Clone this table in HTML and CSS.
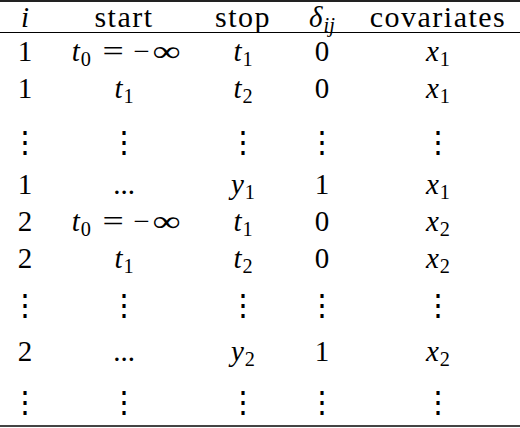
FILE: index.html
```html
<!DOCTYPE html>
<html lang="en">
<head>
    <meta charset="UTF-8">
    <title>Counting process data</title>
    <link rel="stylesheet" href="styles.css">
</head>
<body>
    <table class="data">
        <colgroup>
            <col class="c-i">
            <col class="c-start">
            <col class="c-stop">
            <col class="c-delta">
            <col class="c-cov">
        </colgroup>
        <thead>
            <tr>
                <th><var>i</var></th>
                <th class="word">start</th>
                <th class="word">stop</th>
                <th><var>δ</var><sub><var>ij</var></sub></th>
                <th class="word">covariates</th>
            </tr>
        </thead>
        <tbody>
            <tr>
                <td>1</td>
                <td><var>t</var><sub>0</sub><span class="eq">=</span>−<span class="inf">∞</span></td>
                <td><var>t</var><sub>1</sub></td>
                <td>0</td>
                <td><var>x</var><sub>1</sub></td>
            </tr>
            <tr>
                <td>1</td>
                <td><var>t</var><sub>1</sub></td>
                <td><var>t</var><sub>2</sub></td>
                <td>0</td>
                <td><var>x</var><sub>1</sub></td>
            </tr>
            <tr class="dots dots-a">
                <td>⋮</td><td>⋮</td><td>⋮</td><td>⋮</td><td>⋮</td>
            </tr>
            <tr>
                <td>1</td>
                <td>...</td>
                <td><var>y</var><sub>1</sub></td>
                <td>1</td>
                <td><var>x</var><sub>1</sub></td>
            </tr>
            <tr>
                <td>2</td>
                <td><var>t</var><sub>0</sub><span class="eq">=</span>−<span class="inf">∞</span></td>
                <td><var>t</var><sub>1</sub></td>
                <td>0</td>
                <td><var>x</var><sub>2</sub></td>
            </tr>
            <tr>
                <td>2</td>
                <td><var>t</var><sub>1</sub></td>
                <td><var>t</var><sub>2</sub></td>
                <td>0</td>
                <td><var>x</var><sub>2</sub></td>
            </tr>
            <tr class="dots dots-b">
                <td>⋮</td><td>⋮</td><td>⋮</td><td>⋮</td><td>⋮</td>
            </tr>
            <tr>
                <td>2</td>
                <td>...</td>
                <td><var>y</var><sub>2</sub></td>
                <td>1</td>
                <td><var>x</var><sub>2</sub></td>
            </tr>
            <tr class="dots dots-c">
                <td>⋮</td><td>⋮</td><td>⋮</td><td>⋮</td><td>⋮</td>
            </tr>
        </tbody>
    </table>
</body>
</html>
```

FILE: styles.css
```css
body {
    margin: 0;
    background: #fff;
    color: #000;
    font-family: 'Liberation Serif', serif;
}
.data {
    width: 520px;
    border-collapse: collapse;
    table-layout: fixed;
    font-size: 29px;
    border-top: 2px solid #222;
    border-bottom: 2px solid #444;
}
.c-i { width: 50px; }
.c-start { width: 148px; }
.c-stop { width: 90px; }
.c-delta { width: 68px; }
.c-cov { width: 164px; }

th, td {
    padding: 0;
    text-align: center;
    font-weight: normal;
    white-space: nowrap;
    line-height: 1;
}
thead th {
    height: 30px;
    border-bottom: 1px solid #000;
}
.word {
    font-size: 30px;
    letter-spacing: 1.5px;
}
tbody td {
    height: 37px;
}
var {
    font-style: italic;
}
sub {
    font-size: 0.7em;
    vertical-align: -0.25em;
    line-height: 0;
    margin-left: 1px;
}
.eq {
    display: inline-block;
    margin: 0 12px 0 14px;
    transform: scaleX(1.3);
}
.inf {
    display: inline-block;
    margin-left: 6px;
    transform: scaleX(1.35);
}
.dots td {
    font-family: 'DejaVu Serif', serif;
    font-size: 30px;
}
.dots-a td {
    height: 48px;
    padding-top: 11px;
}
.dots-b td {
    height: 56px;
    padding-top: 0;
}
.dots-c td {
    height: 47px;
    padding-top: 8px;
}
```
